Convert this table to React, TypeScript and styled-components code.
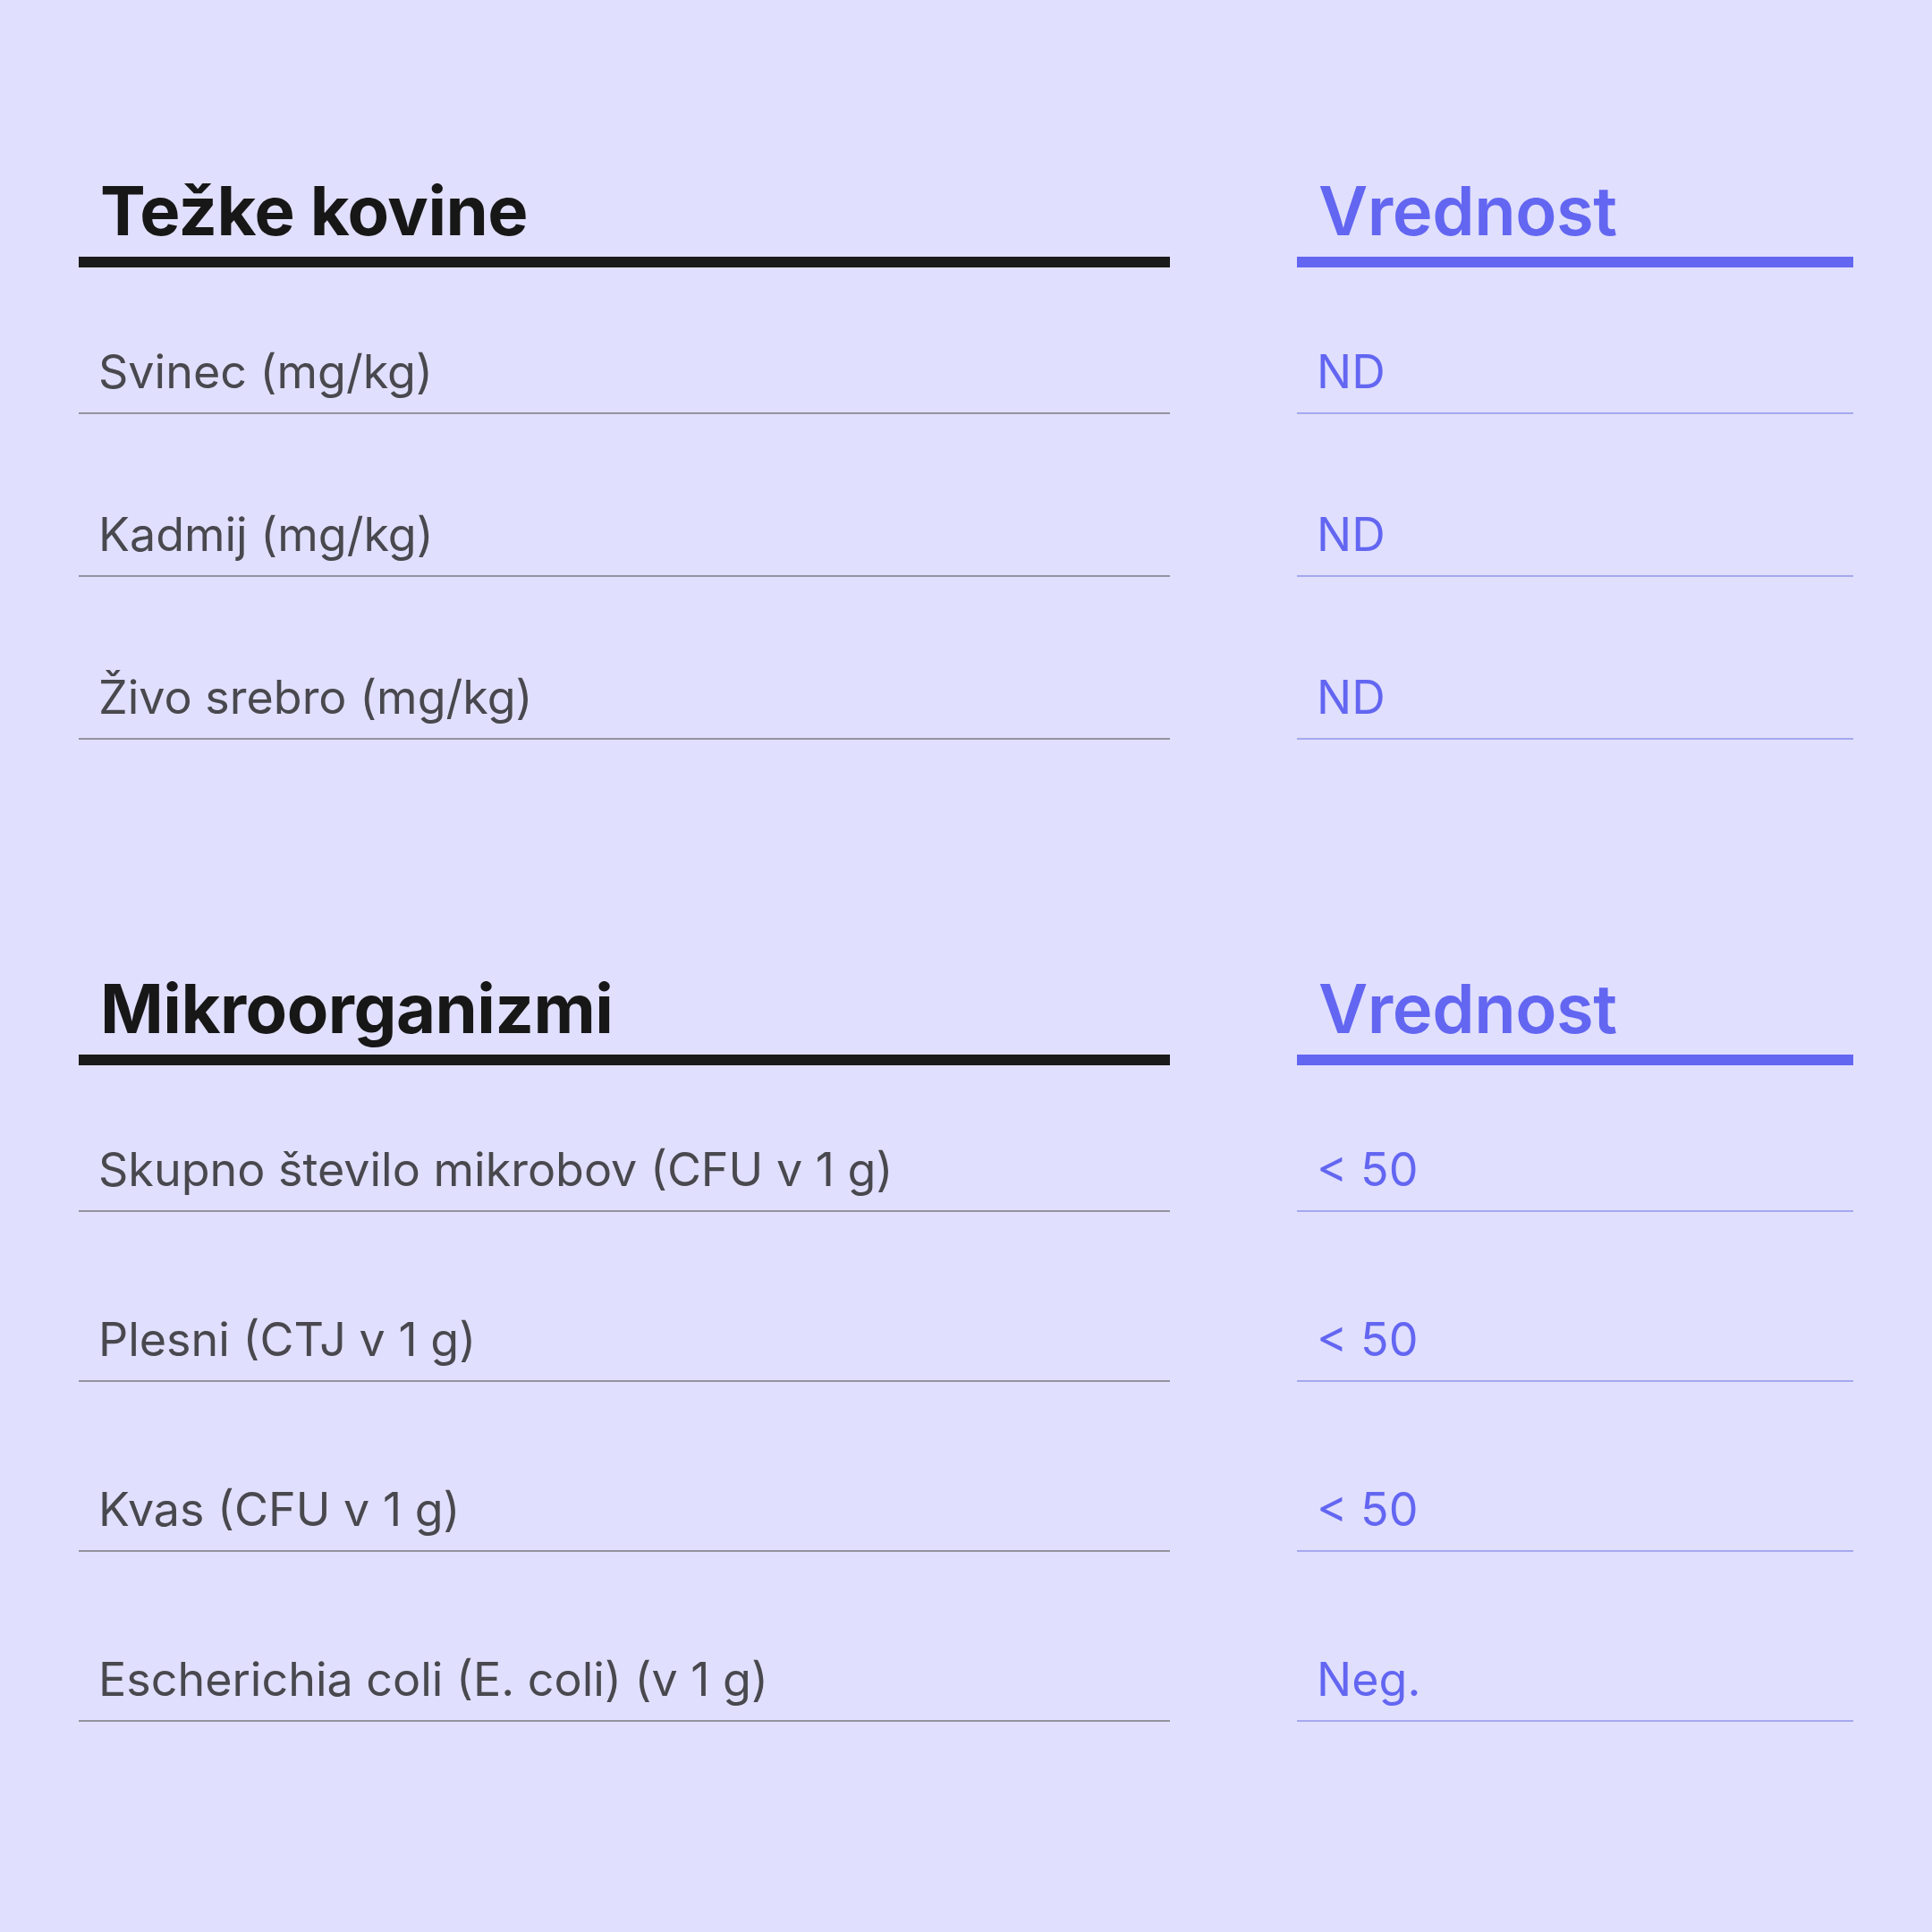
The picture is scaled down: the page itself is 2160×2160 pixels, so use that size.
import React from "react";
import styled, { createGlobalStyle } from "styled-components";

const GlobalStyle = createGlobalStyle`
  html, body {
    margin: 0;
    padding: 0;
    background: #e0dffd;
  }
  body {
    font-family: Inter, "Noto Sans", "Liberation Sans", sans-serif;
    -webkit-font-smoothing: antialiased;
  }
`;

const COLS = "1220px 622px";
const GAP = "142px";

const Page = styled.main`
  min-height: 2160px;
  box-sizing: border-box;
  padding: 197px 0 0 88px;
  display: flex;
  flex-direction: column;
  gap: 262px;
`;

const Section = styled.section`
  display: flex;
  flex-direction: column;
`;

const HeaderRow = styled.div`
  display: grid;
  grid-template-columns: ${COLS};
  column-gap: ${GAP};
`;

const HeaderCell = styled.h2<{ $accent?: boolean }>`
  margin: 0;
  padding: 0 0 14px 24px;
  font-size: 76px;
  line-height: 76px;
  font-weight: ${(p) => (p.$accent ? 600 : 700)};
  letter-spacing: -0.5px;
  color: ${(p) => (p.$accent ? "#6366f1" : "#171717")};
  border-bottom: 12px solid ${(p) => (p.$accent ? "#6366f1" : "#1a1a1a")};
`;

const RowList = styled.div<{ $gap: number }>`
  display: flex;
  flex-direction: column;
  gap: ${(p) => p.$gap}px;
`;

const DataRow = styled.div`
  display: grid;
  grid-template-columns: ${COLS};
  column-gap: ${GAP};
`;

const Cell = styled.div<{ $accent?: boolean }>`
  padding: 86px 0 14px 22px;
  font-size: 52px;
  line-height: 62px;
  font-weight: 400;
  white-space: nowrap;
  color: ${(p) => (p.$accent ? "#6366f1" : "#48484e")};
  border-bottom: 2px solid ${(p) => (p.$accent ? "#a6a8f0" : "#93939e")};
`;

type Item = { label: string; value: string };

const sections: { title: string; gap: number; items: Item[] }[] = [
  {
    title: "Težke kovine",
    gap: 18,
    items: [
      { label: "Svinec (mg/kg)", value: "ND" },
      { label: "Kadmij (mg/kg)", value: "ND" },
      { label: "Živo srebro (mg/kg)", value: "ND" },
    ],
  },
  {
    title: "Mikroorganizmi",
    gap: 26,
    items: [
      { label: "Skupno število mikrobov (CFU v 1 g)", value: "< 50" },
      { label: "Plesni (CTJ v 1 g)", value: "< 50" },
      { label: "Kvas (CFU v 1 g)", value: "< 50" },
      { label: "Escherichia coli (E. coli) (v 1 g)", value: "Neg." },
    ],
  },
];

export default function App() {
  return (
    <>
      <GlobalStyle />
      <Page>
        {sections.map((s) => (
          <Section key={s.title}>
            <HeaderRow>
              <HeaderCell>{s.title}</HeaderCell>
              <HeaderCell $accent>Vrednost</HeaderCell>
            </HeaderRow>
            <RowList $gap={s.gap}>
              {s.items.map((it) => (
                <DataRow key={it.label}>
                  <Cell>{it.label}</Cell>
                  <Cell $accent>{it.value}</Cell>
                </DataRow>
              ))}
            </RowList>
          </Section>
        ))}
      </Page>
    </>
  );
}
